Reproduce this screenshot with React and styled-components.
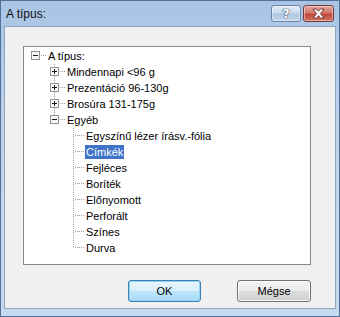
import styled, { createGlobalStyle } from "styled-components";

const GlobalStyle = createGlobalStyle`
  html, body {
    margin: 0;
    padding: 0;
    background: #ffffff;
  }
  * {
    box-sizing: border-box;
  }
`;

const StyledWindow = styled.div`
  width: 340px;
  height: 317px;
  display: flex;
  flex-direction: column;
  border: 1px solid #51709a;
  background: linear-gradient(to bottom, #a9c4e4 0%, #bfd4ec 40%, #c6daf0 100%);
  padding: 0 3px 7px 3px;
  font-family: "Liberation Sans", Arial, sans-serif;
`;

const StyledTitleBar = styled.div`
  height: 25px;
  display: flex;
  align-items: flex-start;
  justify-content: space-between;
  padding: 4px 2px 0 2px;
`;

const StyledTitle = styled.span`
  font-size: 12px;
  line-height: 17px;
  color: #111;
  margin-top: 1px;
`;

const StyledCaptionButtons = styled.div`
  display: flex;
  gap: 2px;
`;

const StyledCaptionButton = styled.div`
  width: ${(p) => (p.$close ? "31px" : "30px")};
  height: 17px;
  display: flex;
  align-items: center;
  justify-content: center;
  border: 1px solid ${(p) => (p.$close ? "#6e3a37" : "#6b84a5")};
  border-radius: 3px;
  background: ${(p) =>
    p.$close
      ? "linear-gradient(to bottom, #e3a49a 0%, #d27b6e 45%, #c0473a 55%, #d4735f 100%)"
      : "linear-gradient(to bottom, #e2ebf6 0%, #c9d9ed 45%, #b0c6e1 55%, #c3d6ec 100%)"};
  box-shadow: inset 0 0 0 1px rgba(255, 255, 255, 0.45);
  color: #fff;
  font-family: "DejaVu Sans", sans-serif;
  font-weight: bold;
  font-size: 13px;
  text-shadow: 0 0 1px #2e3f56, 0 0 1px #2e3f56, 0 0 1px #2e3f56;
`;

const StyledBody = styled.div`
  flex: 1;
  display: flex;
  flex-direction: column;
  background: #f0f0f0;
  border: 1px solid #8fa6c3;
  padding: 19px 0 6px 18px;
`;

const StyledTree = styled.div`
  width: 288px;
  height: 219px;
  background: #ffffff;
  border: 1px solid #828790;
  padding: 1px 0 0 4px;
`;

const StyledRow = styled.div`
  height: 16px;
  display: flex;
  align-items: flex-start;
  padding-left: ${(p) => p.$level * 19}px;
`;

const StyledConnector = styled.div`
  position: relative;
  width: 19px;
  height: 16px;
  flex-shrink: 0;

  &::before {
    content: "";
    display: ${(p) => (p.$up || p.$down ? "block" : "none")};
    position: absolute;
    left: 7px;
    top: ${(p) => (p.$up ? "0" : "7px")};
    height: ${(p) => (p.$up && p.$down ? "16px" : p.$up ? "8px" : "9px")};
    width: 1px;
    background-image: linear-gradient(to bottom, #a0a0a0 50%, transparent 50%);
    background-size: 1px 2px;
  }

  &::after {
    content: "";
    position: absolute;
    left: 8px;
    top: 7px;
    width: 11px;
    height: 1px;
    background-image: linear-gradient(to right, transparent 50%, #a0a0a0 50%);
    background-size: 2px 1px;
  }
`;

const StyledExpander = styled.svg`
  position: absolute;
  left: 3px;
  top: 3px;
  z-index: 1;
`;

const StyledLabel = styled.span`
  font-size: 11px;
  line-height: 14px;
  height: 14px;
  margin-top: 1px;
  padding: 0 1px;
  color: ${(p) => (p.$selected ? "#ffffff" : "#000000")};
  background: ${(p) => (p.$selected ? "#3e74c8" : "transparent")};
  white-space: nowrap;
`;

const StyledButtonRow = styled.div`
  display: flex;
  justify-content: flex-end;
  gap: 36px;
  margin-top: 15px;
  padding-right: 24px;
`;

const StyledButton = styled.div`
  width: ${(p) => (p.$default ? "73px" : "74px")};
  height: 22px;
  display: flex;
  align-items: center;
  justify-content: center;
  font-size: 11px;
  color: #000;
  border-radius: 3px;
  border: 1px solid ${(p) => (p.$default ? "#3c7fb1" : "#707070")};
  background: ${(p) =>
    p.$default
      ? "linear-gradient(to bottom, #eaf6fd 0%, #d9f0fc 50%, #bee6fd 51%, #a7d9f5 100%)"
      : "linear-gradient(to bottom, #f2f2f2 0%, #ebebeb 50%, #dddddd 51%, #cfcfcf 100%)"};
  box-shadow: inset 0 0 0 1px ${(p) => (p.$default ? "#8fd3f5" : "#fcfcfc")};
`;

function Expander({ open }) {
  return (
    <StyledExpander width="9" height="9" viewBox="0 0 9 9">
      <rect x="0.5" y="0.5" width="8" height="8" fill="#f7f7f7" stroke="#929292" />
      <line x1="2" y1="4.5" x2="7" y2="4.5" stroke="#1f1f1f" />
      {!open && <line x1="4.5" y1="2" x2="4.5" y2="7" stroke="#1f1f1f" />}
    </StyledExpander>
  );
}

const treeRows = [
  { label: "A típus:", level: 0, box: "open" },
  { label: "Mindennapi <96 g", level: 1, box: "closed", up: true, down: true },
  { label: "Prezentáció 96-130g", level: 1, box: "closed", up: true, down: true },
  { label: "Brosúra 131-175g", level: 1, box: "closed", up: true, down: true },
  { label: "Egyéb", level: 1, box: "open", up: true },
  { label: "Egyszínű lézer írásv.-fólia", level: 2, up: true, down: true },
  { label: "Címkék", level: 2, up: true, down: true, selected: true },
  { label: "Fejléces", level: 2, up: true, down: true },
  { label: "Boríték", level: 2, up: true, down: true },
  { label: "Előnyomott", level: 2, up: true, down: true },
  { label: "Perforált", level: 2, up: true, down: true },
  { label: "Színes", level: 2, up: true, down: true },
  { label: "Durva", level: 2, up: true },
];

export default function App() {
  return (
    <>
      <GlobalStyle />
      <StyledWindow>
        <StyledTitleBar>
          <StyledTitle>A típus:</StyledTitle>
          <StyledCaptionButtons>
            <StyledCaptionButton>?</StyledCaptionButton>
            <StyledCaptionButton $close>
              <svg width="13" height="11" viewBox="0 0 13 11">
                <path
                  d="M1 1 H4.5 L6.5 3.3 L8.5 1 H12 L8.3 5.5 L12 10 H8.5 L6.5 7.7 L4.5 10 H1 L4.7 5.5 Z"
                  fill="#ffffff"
                  stroke="#5a2a26"
                  strokeWidth="0.8"
                />
              </svg>
            </StyledCaptionButton>
          </StyledCaptionButtons>
        </StyledTitleBar>
        <StyledBody>
          <StyledTree>
            {treeRows.map((row) => (
              <StyledRow key={row.label} $level={row.level}>
                <StyledConnector $up={row.up} $down={row.down}>
                  {row.box && <Expander open={row.box === "open"} />}
                </StyledConnector>
                <StyledLabel $selected={row.selected}>{row.label}</StyledLabel>
              </StyledRow>
            ))}
          </StyledTree>
          <StyledButtonRow>
            <StyledButton $default>OK</StyledButton>
            <StyledButton>Mégse</StyledButton>
          </StyledButtonRow>
        </StyledBody>
      </StyledWindow>
    </>
  );
}
